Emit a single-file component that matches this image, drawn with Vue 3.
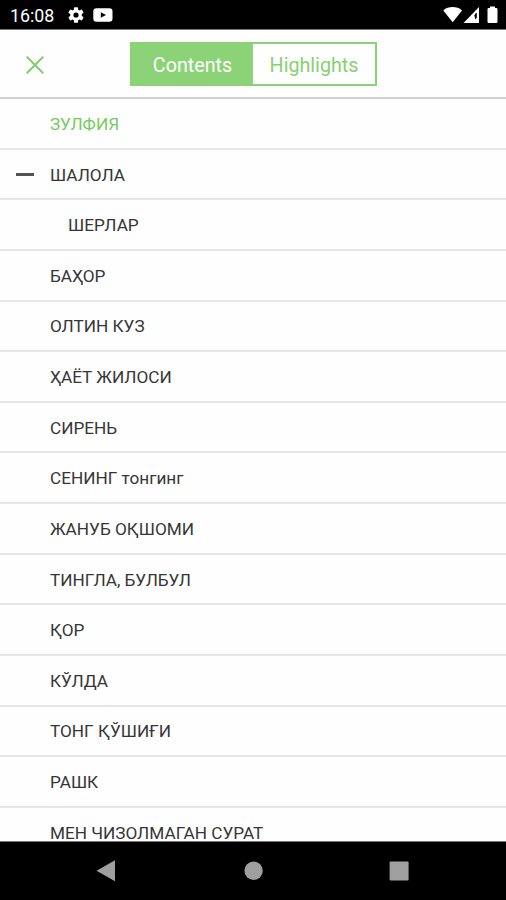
<script setup>
const chapters = [
  { title: 'ЗУЛФИЯ', active: true },
  { title: 'ШАЛОЛА', expanded: true },
  { title: 'ШЕРЛАР', nested: true },
  { title: 'БАҲОР' },
  { title: 'ОЛТИН КУЗ' },
  { title: 'ҲАЁТ ЖИЛОСИ' },
  { title: 'СИРЕНЬ' },
  { title: 'СЕНИНГ тонгинг' },
  { title: 'ЖАНУБ ОҚШОМИ' },
  { title: 'ТИНГЛА, БУЛБУЛ' },
  { title: 'ҚОР' },
  { title: 'КЎЛДА' },
  { title: 'ТОНГ ҚЎШИҒИ' },
  { title: 'РАШК' },
  { title: 'МЕН ЧИЗОЛМАГАН СУРАТ' },
]
</script>

<template>
  <div class="screen">
    <div class="status">
      <span class="clock">16:08</span>
      <svg class="gear" width="16" height="16" viewBox="0 0 16 16">
        <g fill="#fff">
          <rect v-for="a in [0, 60, 120]" :key="a" x="5.9" y="0.2" width="4.2" height="15.6" rx="0.9" :transform="`rotate(${a} 8 8)`" />
          <circle cx="8" cy="8" r="5.8" />
        </g>
        <circle cx="8" cy="8" r="2.6" fill="#000" />
      </svg>
      <svg class="video" width="20" height="14" viewBox="0 0 20 14">
        <rect x="0.3" y="0.3" width="19.2" height="13.4" rx="3.2" fill="#fff" />
        <path d="M7.8 4.2L13 7L7.8 9.8Z" fill="#000" />
      </svg>
      <svg class="signals" width="56" height="18" viewBox="0 0 56 18">
        <path d="M0.3 4.4C5.2 0 14 0 19 4.4L9.7 16.2Z" fill="#fff" />
        <path d="M20.5 17L36 1V17Z" fill="#fff" />
        <path d="M31.4 9.4Q32 7 33.8 7V11.5L32.4 13.5Z" fill="#000" />
        <path d="M44.5 3.2Q44.5 2 45.7 2H47V0.6H52V2H53.3Q54.5 2 54.5 3.2V15.8Q54.5 17 53.3 17H45.7Q44.5 17 44.5 15.8Z" fill="#fff" />
      </svg>
    </div>

    <header class="header">
      <svg class="close" width="18" height="18" viewBox="0 0 18 18">
        <path d="M1.3 1.3L16.7 16.7M16.7 1.3L1.3 16.7" stroke="#83cf70" stroke-width="2.1" stroke-linecap="round" />
      </svg>
      <div class="tabs">
        <div class="tab selected">Contents</div>
        <div class="tab">Highlights</div>
      </div>
    </header>

    <main class="list">
      <div v-for="item in chapters" :key="item.title" class="row" :class="{ active: item.active, nested: item.nested }">
        <span class="marker"><span v-if="item.expanded" class="minus"></span></span>
        <span class="title">{{ item.title }}</span>
      </div>
    </main>

    <nav class="nav">
      <svg width="506" height="58" viewBox="0 0 506 58">
        <g fill="#9f9f9f">
          <path d="M96.5 28.7L115 18.2V39.2Z" />
          <circle cx="253.6" cy="28.7" r="9.2" />
          <rect x="389.6" y="19.4" width="19" height="19" rx="1.2" />
        </g>
      </svg>
    </nav>
  </div>
</template>

<style>
body {
  margin: 0;
  background: #fff;
}
</style>

<style scoped>
.screen {
  width: 506px;
  height: 900px;
  display: flex;
  flex-direction: column;
  overflow: hidden;
  background: #fefefe;
  font-family: Roboto, 'Noto Sans', sans-serif;
}
.status {
  box-sizing: border-box;
  height: 30px;
  flex: none;
  display: flex;
  align-items: center;
  padding: 1px 7px 0 10px;
  background: #000;
  border-bottom: 1px solid #777;
  color: #fff;
}
.clock {
  width: 44px;
  font-size: 17.8px;
  line-height: 20px;
  padding-top: 2px;
}
.gear {
  margin-left: 14px;
}
.video {
  margin-left: 9px;
}
.signals {
  margin-left: auto;
}
.header {
  box-sizing: border-box;
  height: 69px;
  flex: none;
  display: flex;
  align-items: flex-start;
  border-bottom: 2px solid #d2d2d2;
}
.close {
  margin: 26px 0 0 26px;
}
.tabs {
  box-sizing: border-box;
  display: flex;
  width: 247px;
  height: 44px;
  margin: 12px 0 0 86px;
  border: 2px solid #8ad275;
}
.tab {
  flex: 1;
  line-height: 43px;
  text-align: center;
  font-size: 19.7px;
  color: #86d171;
}
.tab.selected {
  flex: 0 0 121px;
  background: #8bd376;
  color: #fff;
}
.list {
  flex: 1;
  min-height: 0;
  overflow: hidden;
}
.row {
  box-sizing: border-box;
  height: 50.64px;
  display: flex;
  align-items: center;
  border-bottom: 2px solid #e6e6e6;
  font-size: 17.2px;
  color: #363636;
  white-space: nowrap;
}
.marker {
  width: 34px;
  padding-left: 16px;
}
.minus {
  display: block;
  width: 18px;
  height: 3px;
  margin-top: 1px;
  background: #555;
}
.title {
  padding-top: 1.3px;
}
.row.nested .title {
  padding-left: 18px;
}
.row.active {
  color: #76cb60;
}
.nav {
  box-sizing: border-box;
  height: 59px;
  flex: none;
  background: #000;
  border-top: 1px solid #777;
}
.nav svg {
  display: block;
}
</style>
